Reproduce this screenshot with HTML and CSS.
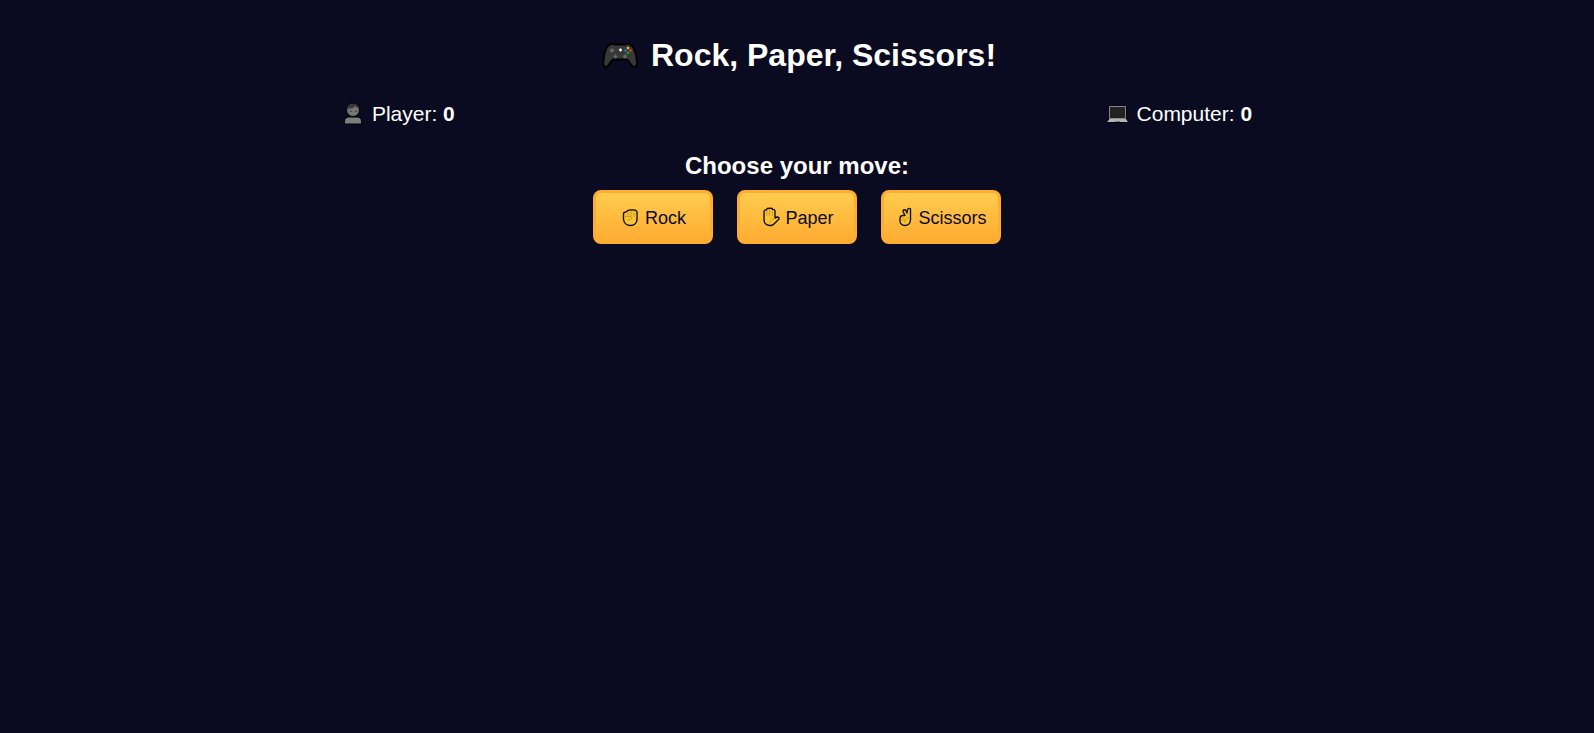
FILE: index.html
```html
<!DOCTYPE html>
<html lang="en">
<head>
<meta charset="utf-8">
<meta name="viewport" content="width=device-width, initial-scale=1">
<title>Rock, Paper, Scissors!</title>
<link rel="stylesheet" href="styles.css">
</head>
<body>
<main class="game">
  <h1 class="title">
    <svg class="icon icon-pad" viewBox="0 0 44 28" aria-hidden="true">
      <path d="M12 3.500Q14 2 17 3.500H27Q30 2 32 3.500L35 6Q38.500 12 39 21Q39 26 36.500 26Q34 26 31 20.500L29 18.500H15L13 20.500Q10 26 7.500 26Q5 26 5.500 20Q6 11 9 6Z" fill="#383838" stroke="#000" stroke-width="2" stroke-linejoin="round"/>
      <circle cx="14" cy="9.500" r="2" fill="#666"/><circle cx="27" cy="15.500" r="1.900" fill="#666"/>
      <path d="M17.500 13.500v4M15.500 15.500h4" stroke="#6b6b6b" stroke-width="1.300"/>
      <circle cx="22.500" cy="9" r="1.400" fill="#fff"/>
      <circle cx="30" cy="7" r="1.300" fill="#f5c400"/><circle cx="27.500" cy="9.500" r="1.300" fill="#2478c8"/><circle cx="32.500" cy="9.500" r="1.300" fill="#e04422"/><circle cx="30" cy="12" r="1.300" fill="#16a316"/>
    </svg>
    <span>Rock, Paper, Scissors!</span>
  </h1>
  <section class="scores">
    <p class="score">
      <svg class="icon icon-score" viewBox="0 0 30 24" aria-hidden="true">
        <path d="M2.500 22V19.500Q2.500 15 7 15H15Q19.500 15 19.500 19.500V22Z" fill="#7d7d7d" stroke="#000" stroke-linejoin="round"/>
        <circle cx="11" cy="8" r="6.500" fill="#777" stroke="#000"/>
        <path d="M5 7.500Q5.500 2 10 2Q15.500 1 17.200 7L15 5.500L13 4Q12 6.500 7.500 6.500Z" fill="#383838"/>
        <path d="M9 8.500v1.500M14 8.500v1.500" stroke="#222"/>
      </svg>
      <span>Player: <strong>0</strong></span>
    </p>
    <p class="score">
      <svg class="icon icon-score" viewBox="0 0 30 24" aria-hidden="true">
        <path d="M2.500 4.500H19V17L21 20H0L2.500 17Z" fill="#888" stroke="#000" stroke-width="1.600" stroke-linejoin="round"/>
        <path d="M2.500 4.500H18.500V16.500H2.500Z" fill="#222" stroke="#888"/>
        <path d="M2.500 17H19L21 20H0Z" fill="#b4b4b4"/><path d="M8 19.500H13" stroke="#777"/>
      </svg>
      <span>Computer: <strong>0</strong></span>
    </p>
  </section>
  <h2 class="prompt">Choose your move:</h2>
  <div class="moves">
    <button class="move" type="button">
      <svg class="icon icon-move" viewBox="-1 0 24 22" aria-hidden="true">
        <path d="M2.500 7Q2.500 5 5 5L7 3.500Q9 2.500 11 3Q14 2.500 15 3.500Q16.500 4.500 16 8V12.500Q15.500 18.500 9.500 18.500Q3.500 18.500 2.500 12.500Z" fill="#f8c436" stroke="#111" stroke-width="1.400" stroke-linejoin="round"/>
        <path d="M7 5v4M10 4v5M13 4v5M4 9.500H10Q12 10 10 12H8v2M13 9h3" fill="none" stroke="#d99a20"/>
      </svg>
      <span>Rock</span>
    </button>
    <button class="move" type="button">
      <svg class="icon icon-move" viewBox="-1 0 24 22" aria-hidden="true">
        <path d="M3 5Q3 2.500 5.500 3Q6 .500 8.500 1.500Q11 .500 11.500 2.500Q14 2 14 4.500V11L16 10Q18.500 10 18 12L14 16Q11.500 19 8.500 18.500Q3 18 3 12.500Z" fill="#f8c436" stroke="#111" stroke-width="1.400" stroke-linejoin="round"/>
        <path d="M5.800 3.500V9M8.500 2.500V9M11.500 3V9M9 16Q9 12 13.500 11.500" fill="none" stroke="#d99a20"/>
      </svg>
      <span>Paper</span>
    </button>
    <button class="move" type="button">
      <svg class="icon icon-move icon-narrow" viewBox="-2 0 22 22" aria-hidden="true">
        <path d="M3 11Q3 9 5.500 8.500H8L6 4.500Q6 2 8.500 3L10 6L10.500 2.500Q12 .500 13.500 2V13Q13 18.500 8 18.500Q3 18 3 14Z" fill="#f8c436" stroke="#111" stroke-width="1.400" stroke-linejoin="round"/>
        <path d="M6 9v3M4 13H8L10 11M8 13v3M10 11h3" fill="none" stroke="#d99a20"/>
      </svg>
      <span>Scissors</span>
    </button>
  </div>
</main>
</body>
</html>
```
FILE: styles.css
```css
* {
  box-sizing: border-box;
}

body {
  margin: 0;
  min-height: 100vh;
  background: #0a0a20;
  color: #fff;
  font-family: "Liberation Sans", Arial, sans-serif;
}

.game {
  padding: 36px 16px;
}

.icon {
  flex: none;
  overflow: visible;
}

.title {
  display: flex;
  justify-content: center;
  align-items: center;
  gap: 9px;
  margin: 0;
  font-size: 32px;
  line-height: 38px;
}

.icon-pad {
  width: 44px;
  height: 28px;
}

.scores {
  display: flex;
  justify-content: space-around;
  margin: 28px 0 26px;
}

.score {
  display: flex;
  align-items: center;
  margin: 0;
  font-size: 21px;
  line-height: 24px;
}

.icon-score {
  width: 30px;
  height: 24px;
}

.prompt {
  margin: 0 0 10px;
  font-size: 24px;
  line-height: 28px;
  text-align: center;
}

.moves {
  display: flex;
  justify-content: center;
  gap: 24px;
}

.move {
  display: flex;
  justify-content: center;
  align-items: center;
  gap: 1px;
  width: 120px;
  height: 54px;
  padding: 2px 0 0;
  border: 3px solid #ffac33;
  border-radius: 8px;
  background: linear-gradient(#ffcc4c, #ffac33);
  color: #0a0a23;
  font-family: inherit;
  font-size: 18px;
  cursor: pointer;
}

.icon-move {
  width: 24px;
  height: 22px;
}

.icon-narrow {
  width: 22px;
}
```
